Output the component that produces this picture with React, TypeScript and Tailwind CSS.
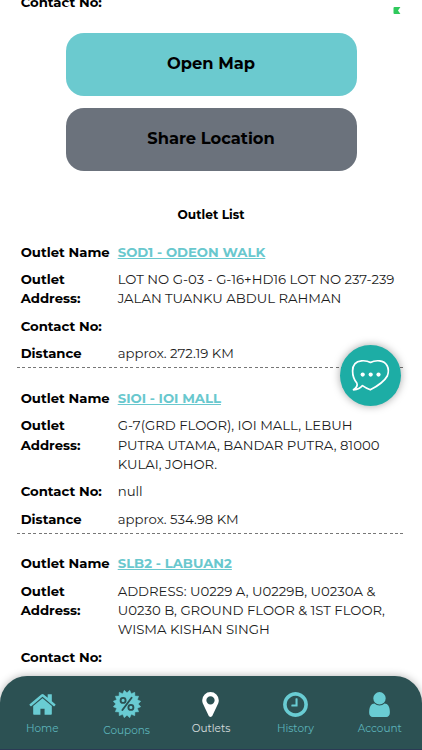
import type { ReactNode } from "react";

type Outlet = {
  name: string;
  address: string[];
  contact?: string;
  distance?: string;
};

const OUTLETS: Outlet[] = [
  {
    name: "SOD1 - ODEON WALK",
    address: ["LOT NO G-03 - G-16+HD16 LOT NO 237-239", "JALAN TUANKU ABDUL RAHMAN"],
    distance: "approx. 272.19 KM",
  },
  {
    name: "SIOI - IOI MALL",
    address: ["G-7(GRD FLOOR), IOI MALL, LEBUH", "PUTRA UTAMA, BANDAR PUTRA, 81000", "KULAI, JOHOR."],
    contact: "null",
    distance: "approx. 534.98 KM",
  },
  {
    name: "SLB2 - LABUAN2",
    address: ["ADDRESS: U0229 A, U0229B, U0230A &", "U0230 B, GROUND FLOOR & 1ST FLOOR,", "WISMA KISHAN SINGH"],
  },
];

const ICON_PATHS = {
  home: "M1472 992v480q0 26-19 45t-45 19h-384v-384h-256v384h-384q-26 0-45-19t-19-45v-480q0-1 .5-3t.5-3l575-474 575 474q1 2 1 6zm223-69l-62 74q-8 9-21 11h-3q-13 0-21-7l-692-577-692 577q-12 8-24 7-13-2-21-11l-62-74q-8-10-7-23.5t11-21.5l719-599q32-26 76-26t76 26l244 204v-195q0-14 9-23t23-9h192q14 0 23 9t9 23v408l219 182q10 8 11 21.5t-7 23.5z",
  marker:
    "M1152 640q0-106-75-181t-181-75-181 75-75 181 75 181 181 75 181-75 75-181zm256 0q0 109-33 179l-364 774q-16 33-47.5 52t-67.5 19-67.5-19-46.5-52l-365-774q-33-70-33-179 0-212 150-362t362-150 362 150 150 362z",
  clock:
    "M1024 544v448q0 14-9 23t-23 9h-320q-14 0-23-9t-9-23v-64q0-14 9-23t23-9h224v-352q0-14 9-23t23-9h64q14 0 23 9t9 23zm416 352q0-148-73-273t-198-198-273-73-273 73-198 198-73 273 73 273 198 198 273 73 273-73 198-198 73-273zm224 0q0 209-103 385.5t-279.5 279.5-385.5 103-385.5-103-279.5-279.5-103-385.5 103-385.5 279.5-279.5 385.5-103 385.5 103 279.5 279.5 103 385.5z",
  user: "M1536 1399q0 109-62.5 187t-150.5 78h-854q-88 0-150.5-78t-62.5-187q0-85 8.5-160.5t31.5-152 58.5-131 94-89 134.5-34.5q131 128 313 128t313-128q76 0 134.5 34.5t94 89 58.5 131 31.5 152 8.5 160.5zm-256-887q0 159-112.5 271.5t-271.5 112.5-271.5-112.5-112.5-271.5 112.5-271.5 271.5-112.5 271.5 112.5 112.5 271.5z",
};

function Glyph({ d }: { d: string }) {
  return (
    <svg viewBox="0 0 1792 1792" className="size-[29px]" fill="currentColor" aria-hidden="true">
      <path d={d} />
    </svg>
  );
}

const BADGE_TEETH = 16;
const BADGE_POINTS = Array.from({ length: BADGE_TEETH * 2 }, (_, i) => {
  const r = i % 2 === 0 ? 14 : 11.2;
  const a = (Math.PI * (i + 1)) / BADGE_TEETH;
  return `${(15 + r * Math.sin(a)).toFixed(2)},${(15 - r * Math.cos(a)).toFixed(2)}`;
}).join(" ");

function CouponIcon() {
  return (
    <svg viewBox="0 0 30 30" className="size-[30px]" aria-hidden="true">
      <polygon points={BADGE_POINTS} fill="currentColor" stroke="currentColor" strokeWidth="0.5" strokeLinejoin="round" />
      <g fill="none" stroke="#2c5153" strokeWidth="1.9" strokeLinecap="round">
        <circle cx="11.1" cy="11.4" r="2.5" />
        <circle cx="18.9" cy="18.4" r="2.5" />
        <path d="M19.6 8.8L10.4 21" />
      </g>
    </svg>
  );
}

function ChatBubble() {
  return (
    <button
      type="button"
      aria-label="Chat"
      className="absolute top-[344.5px] left-[340.4px] flex size-[61px] items-center justify-center rounded-full bg-[#1dada5] shadow-[0_0_8px_rgba(0,0,0,0.35)]"
    >
      <svg viewBox="0 0 61 61" className="size-[61px]" fill="none" aria-hidden="true">
        <path
          d="M30.5 17.5C28 15.9 24.5 15.6 21.5 15.8C15.5 16.3 12.6 20.5 12.6 26C12.6 31 14.3 35 16.8 38C18 40.5 16 43 13.5 44.8C17.3 44.6 20.5 43.3 22.5 40.6C25 42.4 27.6 43.8 30.3 44.8C36.5 41.6 44.5 36 47.3 31C50.3 23.5 46.5 16.2 39.5 15.8C36.5 15.6 33 15.9 30.5 17.5Z"
          stroke="white"
          strokeWidth="1.7"
          strokeLinejoin="round"
        />
        <circle cx="22.7" cy="29.6" r="2.1" fill="white" />
        <circle cx="30.7" cy="29.6" r="2.1" fill="white" />
        <circle cx="38.5" cy="29.6" r="2.1" fill="white" />
      </svg>
    </button>
  );
}

function Row({ label, children }: { label: ReactNode; children?: ReactNode }) {
  return (
    <div className="flex py-1">
      <dt className="w-[97px] shrink-0 font-bold whitespace-nowrap">{label}</dt>
      <dd className="whitespace-nowrap text-[#1c1c1c]">{children}</dd>
    </div>
  );
}

function OutletCard({ outlet }: { outlet: Outlet }) {
  return (
    <section className="mb-[16.5px]">
      <dl className="pl-1">
        <Row label="Outlet Name">
          <a href="#" className="font-bold text-[#69c8ce] underline">
            {outlet.name}
          </a>
        </Row>
        <Row
          label={
            <>
              Outlet
              <br />
              Address:
            </>
          }
        >
          {outlet.address.map((line) => (
            <span key={line} className="block">
              {line}
            </span>
          ))}
        </Row>
        <Row label="Contact No:">{outlet.contact}</Row>
        <Row label="Distance">{outlet.distance}</Row>
      </dl>
      <div className="h-px bg-[repeating-linear-gradient(90deg,#777_0_3px,transparent_3px_5.4px)]" />
    </section>
  );
}

type NavItemProps = { label: string; active?: boolean; low?: boolean; children: ReactNode };

function NavItem({ label, active, low, children }: NavItemProps) {
  return (
    <a href="#" className={`flex w-1/5 flex-col items-center ${active ? "text-white" : "text-[#69ccd3]"}`}>
      <span className="flex h-[30px] items-center">{children}</span>
      <span className={`text-[10.5px] leading-[14px] opacity-80 ${low ? "mt-[5px]" : "mt-[3px]"}`}>{label}</span>
    </a>
  );
}

export default function App() {
  return (
    <div className="relative flex h-[750px] w-[422px] flex-col overflow-hidden bg-white font-['Montserrat','Inter',sans-serif] text-[13.24px] leading-[19.35px] text-black">
      <div className="h-[32.5px] shrink-0 pl-[20.7px]">
        <p className="-mt-[7px] font-bold">Contact No:</p>
      </div>
      <span className="absolute top-[4px] left-[65px] h-[2px] w-[4px] rounded-full bg-white" />
      <svg className="absolute top-[7px] left-[393px] h-[7px] w-[8px]" viewBox="0 0 8 7" aria-hidden="true">
        <path d="M1.5 0H7.4L5 3.5L7.4 7H1.5Q.5 7 .5 6V1Q.5 0 1.5 0Z" fill="#2fc95c" />
      </svg>

      <div className="flex shrink-0 flex-col items-center gap-[12px]">
        <button type="button" className="h-[63px] w-[291px] rounded-[18px] bg-[#6bcacf] text-[16.3px] font-bold">
          Open Map
        </button>
        <button type="button" className="h-[63px] w-[291px] rounded-[18px] bg-[#6b727c] text-[16.3px] font-bold">
          Share Location
        </button>
      </div>

      <h2 className="mt-[34.6px] text-center text-[12.2px] font-bold">Outlet List</h2>

      <main className="mt-[14.2px] mr-[16px] ml-[16.7px]">
        {OUTLETS.map((outlet) => (
          <OutletCard key={outlet.name} outlet={outlet} />
        ))}
      </main>

      <ChatBubble />

      <nav className="absolute inset-x-0 bottom-0 flex h-[74px] rounded-t-[27px] border-b border-[#2b3a55] bg-[#2c5153] pt-[13px] shadow-[0_0_8px_rgba(0,0,0,0.3)]">
        <NavItem label="Home">
          <Glyph d={ICON_PATHS.home} />
        </NavItem>
        <NavItem label="Coupons" low>
          <CouponIcon />
        </NavItem>
        <NavItem label="Outlets" active>
          <Glyph d={ICON_PATHS.marker} />
        </NavItem>
        <NavItem label="History">
          <Glyph d={ICON_PATHS.clock} />
        </NavItem>
        <NavItem label="Account">
          <Glyph d={ICON_PATHS.user} />
        </NavItem>
      </nav>
    </div>
  );
}
